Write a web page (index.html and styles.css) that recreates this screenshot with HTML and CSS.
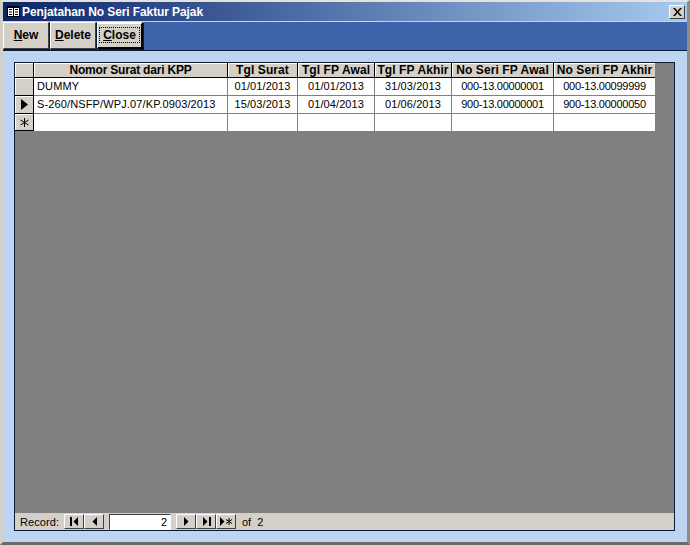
FILE: index.html
```html
<!DOCTYPE html>
<html>
<head>
<meta charset="utf-8">
<title>Penjatahan No Seri Faktur Pajak</title>
<link rel="stylesheet" href="styles.css">
</head>
<body>
<div class="window">
  <div class="titlebar">
    <svg class="form-icon" width="13" height="11" viewBox="0 0 13 11"><rect x="0.500" y="0.500" width="12" height="10" fill="#fff" stroke="#000"/><path d="M1 1h11v1H1z" fill="#000"/><path d="M2 3.500h3M2 6h3M2 8.500h3M8 3.500h3M8 6h3M8 8.500h3" stroke="#000" fill="none"/><path d="M6.500 2v8" stroke="#000"/></svg>
    <span class="title">Penjatahan No Seri Faktur Pajak</span>
    <button class="close-x"><svg width="9" height="8" viewBox="0 0 9 8"><path d="M0 0h2l2.500 3L7 0h2L5.500 4 9 8H7L4.500 5 2 8H0l3.500-4z" fill="#000"/></svg></button>
  </div>
  <div class="toolbar">
    <button class="btn"><u>N</u>ew</button>
    <button class="btn"><u>D</u>elete</button>
    <button class="btn btn-close"><span class="focus"><u>C</u>lose</span></button>
  </div>
  <div class="client">
    <div class="datasheet">
      <div class="grid-area">
        <div class="grid">
          <div class="corner"></div>
          <div class="head head-wide">Nomor Surat dari KPP</div>
          <div class="head">Tgl Surat</div>
          <div class="head">Tgl FP Awal</div>
          <div class="head">Tgl FP Akhir</div>
          <div class="head">No Seri FP Awal</div>
          <div class="head">No Seri FP Akhir</div>

          <div class="sel"></div>
          <div class="cell left">DUMMY</div>
          <div class="cell">01/01/2013</div>
          <div class="cell">01/01/2013</div>
          <div class="cell">31/03/2013</div>
          <div class="cell num">000-13.00000001</div>
          <div class="cell num">000-13.00099999</div>

          <div class="sel"><svg width="7" height="11" viewBox="0 0 7 11"><path d="M0 0l7 5.500L0 11z" fill="#000"/></svg></div>
          <div class="cell left">S-260/NSFP/WPJ.07/KP.0903/2013</div>
          <div class="cell">15/03/2013</div>
          <div class="cell">01/04/2013</div>
          <div class="cell">01/06/2013</div>
          <div class="cell num">900-13.00000001</div>
          <div class="cell num">900-13.00000050</div>

          <div class="sel"><svg width="9" height="9" viewBox="0 0 9 9"><path d="M4.500 0v9M0.500 2l8 5M8.500 2l-8 5" stroke="#000" fill="none"/></svg></div>
          <div class="cell left"></div>
          <div class="cell"></div>
          <div class="cell"></div>
          <div class="cell"></div>
          <div class="cell"></div>
          <div class="cell"></div>
        </div>
      </div>
      <div class="recordbar">
        <span class="rec-label">Record:</span>
        <button class="nav"><svg width="9" height="9" viewBox="0 0 9 9"><path d="M0 0h2v9H0zM8 0v9L3.500 4.500z" fill="#000"/></svg></button>
        <button class="nav"><svg width="5" height="9" viewBox="0 0 5 9"><path d="M5 0v9L0.500 4.500z" fill="#000"/></svg></button>
        <input class="rec-input" value="2" readonly>
        <button class="nav"><svg width="5" height="9" viewBox="0 0 5 9"><path d="M0 0v9l4.500-4.500z" fill="#000"/></svg></button>
        <button class="nav"><svg width="9" height="9" viewBox="0 0 9 9"><path d="M1 0v9l4.500-4.500zM7 0h2v9H7z" fill="#000"/></svg></button>
        <button class="nav"><svg width="13" height="9" viewBox="0 0 13 9"><path d="M0 0v9l4.500-4.500z" fill="#000"/><path d="M9 1v7M6 2.500l6 4M12 2.500l-6 4" stroke="#000" fill="none"/></svg></button>
        <span class="rec-of">of&nbsp; 2</span>
      </div>
    </div>
  </div>
</div>
</body>
</html>
```

FILE: styles.css
```css
* { box-sizing: border-box; }
html, body { margin: 0; padding: 0; }
body { width: 690px; height: 545px; overflow: hidden; background: #bdd5f1; font-family: "Liberation Sans", Arial, sans-serif; font-size: 11px; color: #000; }
.window { width: 690px; height: 545px; display: flex; flex-direction: column; background: #bdd5f1; border-style: solid; border-width: 2px 3px 3px 3px; border-color: #e4e2dc #8c8c8c #6a6a6a #d4d0c8; }
.titlebar { height: 19px; flex: none; display: flex; align-items: center; padding: 0 2px 0 4px; background: linear-gradient(to right, #0a246a, #a6caf0); color: #fff; font-weight: bold; font-size: 12px; }
.form-icon { flex: none; margin-right: 2px; }
.title { flex: 1; white-space: nowrap; letter-spacing: -0.1px; }
.close-x { width: 16px; height: 14px; padding: 0; display: flex; align-items: center; justify-content: center; background: #d4d0c8; border: 1px solid; border-color: #fff #404040 #404040 #fff; }
.toolbar { height: 29px; flex: none; display: flex; align-items: flex-start; gap: 1px; margin-top: 1px; background: #3f63a9; border-bottom: 1px solid #0a1a3a; }
.btn { width: 46px; height: 27px; padding: 0 0 1px; background: #d4d0c8; font: bold 12px "Liberation Sans", Arial, sans-serif; color: #000; border: 1px solid; border-color: #fff #404040 #404040 #fff; box-shadow: 1px 1px 0 #0a1a3a; }
.btn-close { display: flex; align-items: center; justify-content: center; border-width: 2px 2px 2px 1px; border-color: #fff #000 #000 #fff; }
.focus { padding: 0 3px; outline: 1px dotted #000; line-height: 14px; }
.client { flex: 1; padding: 11px 12px 11px 11px; display: flex; }
.datasheet { flex: 1; display: flex; flex-direction: column; background: #808080; border: 1px solid #0a1a3a; }
.grid-area { flex: 1; }
.grid { display: grid; grid-template-columns: 19px 194px 70px 77px 77px 102px 101px; grid-template-rows: 15px 18px 18px 17px; width: 640px; background: #fff; }
.corner, .head, .sel { background: #d4d0c8; border-right: 1px solid #000; border-bottom: 1px solid #000; box-shadow: inset 1px 1px 0 #fff; }
.head { display: flex; align-items: center; justify-content: center; font-weight: bold; font-size: 12px; letter-spacing: 0.1px; white-space: nowrap; overflow: hidden; }
.head.head-wide { letter-spacing: -0.2px; }
.head:nth-child(7) { border-right: 0; }
.sel { display: flex; align-items: center; justify-content: center; }
.cell { display: flex; align-items: center; justify-content: center; border-right: 1px solid #808080; border-bottom: 1px solid #808080; background: #fff; white-space: nowrap; padding-bottom: 2px; font-size: 11px; letter-spacing: 0.1px; }
.cell.left { justify-content: flex-start; padding-left: 3px; letter-spacing: 0.13px; }
.cell.num { letter-spacing: -0.25px; }
.cell:nth-child(7n) { border-right: 0; }
.grid > .cell:nth-last-child(-n+6) { border-bottom: 0; }
.recordbar { height: 17px; flex: none; display: flex; align-items: center; background: #d4d0c8; padding-left: 5px; font-size: 11px; }
.rec-label { width: 44px; flex: none; letter-spacing: 0.1px; }
.nav { width: 20px; height: 15px; padding: 0; flex: none; display: flex; align-items: center; justify-content: center; background: #d4d0c8; border: 1px solid; border-color: #fff #404040 #404040 #fff; }
.rec-input { width: 62px; height: 16px; margin: 1px 5px 0 5px; padding: 0 3px 0 0; flex: none; text-align: right; font: 11px "Liberation Sans", Arial, sans-serif; background: #fff; border: 1px solid; border-color: #404040 #fff #fff #404040; outline: none; }
.rec-of { margin-left: 6px; }
```
